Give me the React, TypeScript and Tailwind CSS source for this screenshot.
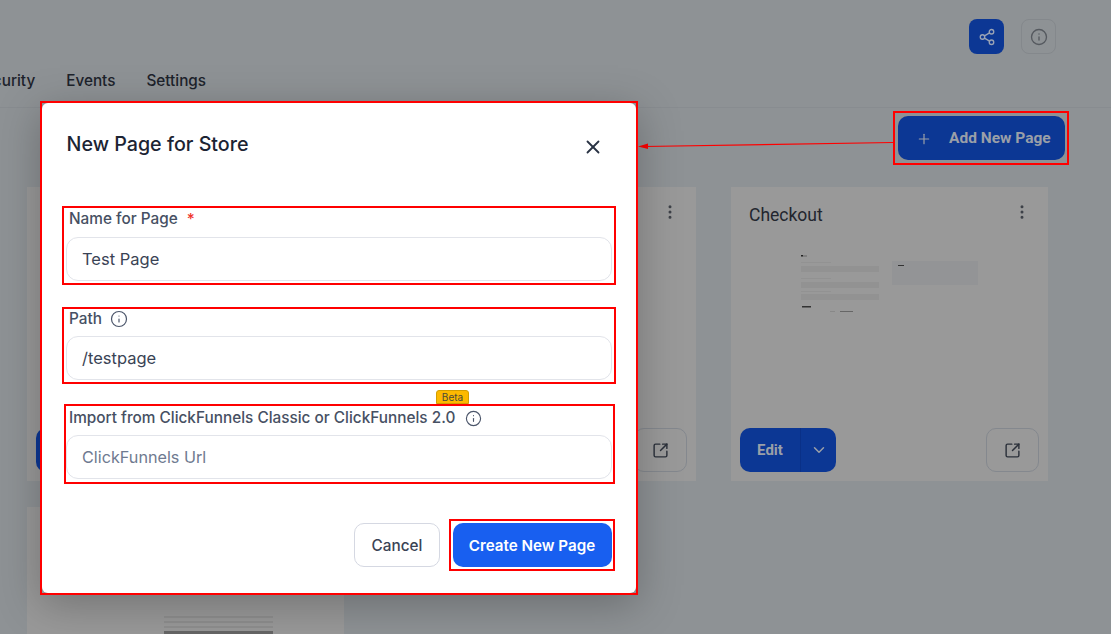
import { ChevronDown, EllipsisVertical, Info, Plus, Share2, SquareArrowOutUpRight, X } from "lucide-react";

function CheckoutThumb() {
  return (
    <svg width="190" height="70" viewBox="0 0 190 70" className="ml-[69px] mt-[12px]">
      <rect x="1" y="1" width="2" height="1.5" fill="#222" />
      <rect x="3" y="1.5" width="4" height="1" fill="#666" />
      <rect x="1" y="8" width="30" height="1" fill="#929292" />
      <rect x="1" y="12" width="78" height="6" fill="#929292" />
      <rect x="1" y="24" width="30" height="1" fill="#929292" />
      <rect x="1" y="28" width="78" height="6" fill="#929292" />
      <rect x="1" y="37" width="30" height="1" fill="#929292" />
      <rect x="1" y="40" width="78" height="6" fill="#929292" />
      <rect x="2" y="52" width="9" height="1.5" fill="#333" />
      <rect x="30" y="57" width="5" height="1" fill="#888" />
      <rect x="40" y="57" width="13" height="1" fill="#666" />
      <rect x="92" y="7" width="86" height="24" fill="#939496" />
      <rect x="98" y="11" width="6" height="1" fill="#333" />
    </svg>
  );
}

function StubThumb() {
  return (
    <svg width="110" height="30" viewBox="0 0 110 30" className="ml-[137px] mt-[54px]">
      <rect x="0" y="0" width="109" height="2" fill="#8e8e8e" />
      <rect x="0" y="5" width="109" height="2" fill="#8e8e8e" />
      <rect x="0" y="10" width="109" height="2" fill="#8e8e8e" />
      <rect x="0" y="15" width="109" height="15" fill="#666666" />
    </svg>
  );
}

function PageCard({ title, children, actions = true }: { title?: string; children?: React.ReactNode; actions?: boolean }) {
  return (
    <div className="relative flex h-[294px] flex-col bg-[#999999]">
      <div className="flex h-[55px] items-start justify-between pl-[18px] pr-[17px] pt-[17px]">
        <span className="font-['Roboto',sans-serif] text-[17.5px] leading-[22px] text-[#22262e]">{title}</span>
        <EllipsisVertical size={18} strokeWidth={2} className="mt-[-1px] text-[#3d4148]" />
      </div>
      <div className="flex-1">{children}</div>
      {actions && (
        <div className="flex items-center justify-between pb-[9px] pl-[9px] pr-[9px]">
          <div className="flex h-[44px] w-[96px] overflow-hidden rounded-[10px] bg-[#0c3794] font-['Roboto',sans-serif] text-[15px] font-bold text-[#9a9fa8]">
            <div className="flex w-[61px] items-center justify-center border-r border-[#0a3087]">Edit</div>
            <div className="flex flex-1 items-center justify-center">
              <ChevronDown size={18} />
            </div>
          </div>
          <div className="flex h-[44px] w-[53px] items-center justify-center rounded-[10px] border border-[#84888e]">
            <SquareArrowOutUpRight size={17} strokeWidth={2} className="text-[#2b303a]" />
          </div>
        </div>
      )}
    </div>
  );
}

function Field({
  label,
  value,
  placeholder,
  boxClass,
  labelClass,
  inputClass,
  after,
}: {
  label: string;
  value?: string;
  placeholder?: string;
  boxClass: string;
  labelClass: string;
  inputClass: string;
  after?: React.ReactNode;
}) {
  return (
    <div className={`border-2 border-[#ff0000] ${boxClass}`}>
      <div className={`flex items-center text-[15.35px] font-medium leading-[18px] text-[#465063] ${labelClass}`}>
        {label}
        {after}
      </div>
      <div
        className={`flex h-[44px] w-[546px] items-center rounded-[12px] border border-[#e2e4ea] pl-[15px] ${inputClass} ${
          value ? "text-[16.5px] text-[#3a4355]" : "text-[16.2px] text-[#6f7a90]"
        }`}
      >
        {value || placeholder}
      </div>
    </div>
  );
}

export default function App() {
  return (
    <div className="relative h-[634px] w-[1111px] overflow-hidden bg-[#8e9295] font-['Inter',sans-serif]">
      <div className="flex justify-end gap-[17px] pr-[55px] pt-[19px]">
        <div className="flex h-[35px] w-[35px] items-center justify-center rounded-[8px] bg-[#0c3794]">
          <Share2 size={18} strokeWidth={1.8} className="text-[#9aa3b5]" />
        </div>
        <div className="flex h-[35px] w-[35px] items-center justify-center rounded-[8px] border border-[#84888c]">
          <Info size={18} strokeWidth={1.8} className="text-[#55595f]" />
        </div>
      </div>

      <div className="ml-[-26px] mt-[17px] flex h-[20px] items-center gap-[31px] text-[15.3px] font-medium text-[#1d222b]">
        <span>Security</span>
        <span>Events</span>
        <span>Settings</span>
      </div>

      <div className="mt-[16px] flex h-[80px] justify-end border-t border-[#888c90] pr-[46px] pt-[8px]">
        <button className="flex h-[44px] w-[167px] items-center rounded-[10px] bg-[#0c3794] pl-[18px] font-['Roboto',sans-serif] text-[15.5px] font-bold text-[#9a9fa8]">
          <Plus size={16} strokeWidth={1.8} className="mt-[1px]" />
          <span className="ml-[17px] mt-[2px]">Add New Page</span>
        </button>
      </div>

      <div className="ml-[27px] grid w-[1021px] grid-cols-3 gap-x-[35px] gap-y-[26px]">
        <PageCard />
        <PageCard />
        <PageCard title="Checkout">
          <CheckoutThumb />
        </PageCard>
        <PageCard actions={false}>
          <StubThumb />
        </PageCard>
      </div>

      {/* annotation around the add button */}
      <div className="absolute left-[893px] top-[111px] h-[54px] w-[176px] border-2 border-[#ff0000]" />
      <svg className="absolute left-[630px] top-[135px]" width="270" height="20" viewBox="0 0 270 20">
        <path d="M263 7.5 L14 11.5" stroke="#ff0000" strokeWidth="1.2" fill="none" />
        <path d="M8 11.5 L18 8.5 L18 14 Z" fill="#ff0000" />
      </svg>

      {/* dialog */}
      <div className="absolute left-[40px] top-[101px] h-[494px] w-[598px] border-2 border-[#ff0000] shadow-[0_10px_40px_rgba(0,0,0,0.25)]">
        <div className="h-full rounded-[6px] bg-white pl-[20px]">
          <div className="flex h-[103px] items-start justify-between pl-[4.5px] pr-[32px] pt-[26px]">
            <h2 className="text-[19.7px] font-medium leading-[30px] text-[#1c2433]">New Page for Store</h2>
            <X size={22} strokeWidth={2} className="mt-[7px] text-[#2a3344]" />
          </div>

          <Field
            label="Name for Page"
            value="Test Page"
            boxClass="h-[79px] w-[554px]"
            labelClass="pl-[5px] pt-[1px]"
            inputClass="ml-[2px] mt-[8px]"
            after={<span className="ml-[9px] mt-[2px] text-[#f0342c]">*</span>}
          />
          <Field
            label="Path"
            value="/testpage"
            boxClass="mt-[22px] h-[77px] w-[554px]"
            labelClass="pl-[5px] pt-[1px]"
            inputClass="ml-[2px] mt-[8px]"
            after={<Info size={18} strokeWidth={1.6} className="ml-[8px] text-[#4b556a]" />}
          />
          <div className="relative">
            <span className="absolute left-[374px] top-[-14px] z-10 flex h-[14px] w-[33px] items-center justify-center rounded-t-[3px] border border-[#d39e00] bg-[#fdb900] text-[10px] text-[#4a4a3a]">
              Beta
            </span>
            <Field
              label="Import from ClickFunnels Classic or ClickFunnels 2.0"
              placeholder="ClickFunnels Url"
              boxClass="mt-[20px] h-[80px] w-[551px] ml-[2px]"
              labelClass="pl-[3px] pt-[3px]"
              inputClass="mt-[8px]"
              after={<Info size={17} strokeWidth={1.6} className="ml-[10px] text-[#4b556a]" />}
            />
          </div>

          <div className="mt-[35px] flex h-[52px] items-center justify-end pr-[21px]">
            <button className="flex h-[44px] w-[86px] items-center justify-center rounded-[10px] border border-[#d5d8e2] pt-[2px] text-[15.3px] font-medium text-[#3a4355]">
              Cancel
            </button>
            <div className="ml-[9px] flex h-[52px] w-[166px] items-center justify-center border-2 border-[#ff0000]">
              <button className="h-[44px] w-[159px] rounded-[10px] bg-[#185ff0] pt-[2px] text-[15.2px] font-semibold text-white">
                Create New Page
              </button>
            </div>
          </div>
        </div>
      </div>
    </div>
  );
}
